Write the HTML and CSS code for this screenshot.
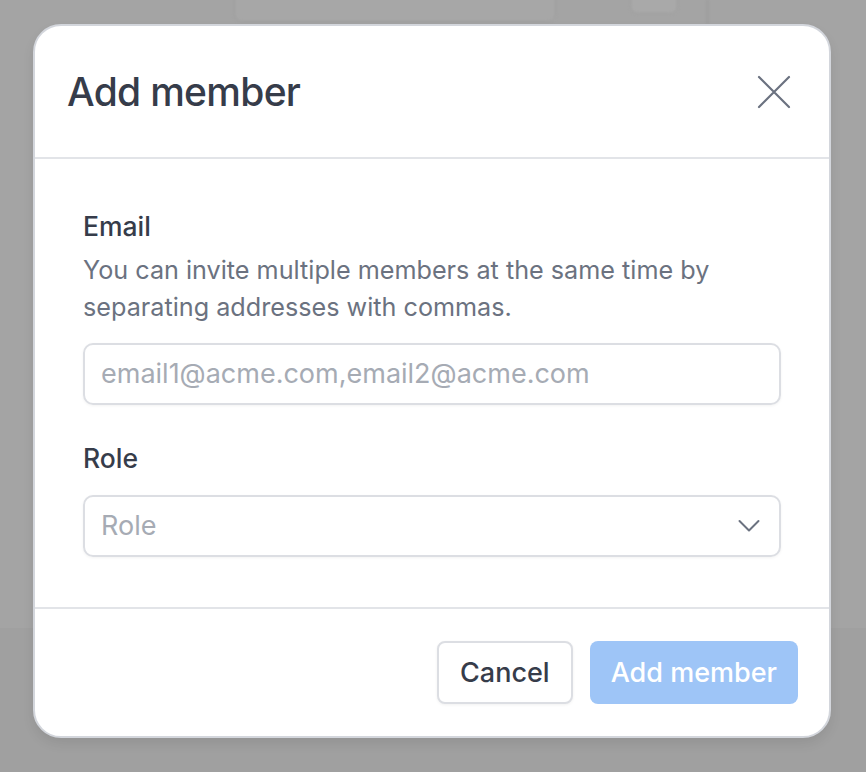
FILE: index.html
```html
<!DOCTYPE html>
<html>
<head>
<meta charset="utf-8">
<link rel="stylesheet" href="styles.css">
</head>
<body>
<div class="backdrop">
  <div class="bg-bar">
    <div class="bg-btn"></div>
    <div class="bg-sq"></div>
    <div class="bg-line"></div>
  </div>
  <div class="bg-band"></div>
  <div class="modal">
    <div class="modal-header">
      <h2 class="title">Add member</h2>
      <button class="close" aria-label="Close">
        <svg width="34" height="34" viewBox="0 0 34 34" fill="none" stroke="#6b7280" stroke-width="2.2" stroke-linecap="round"><path d="M2 2 L32 32 M32 2 L2 32"/></svg>
      </button>
    </div>
    <div class="modal-body">
      <div class="label">Email</div>
      <div class="help">You can invite multiple members at the same time by separating addresses with commas.</div>
      <div class="input input-email"><span class="placeholder">email1@acme.com,email2@acme.com</span></div>
      <div class="label label-role">Role</div>
      <div class="input select">
        <span class="placeholder">Role</span>
        <svg width="24" height="14" viewBox="0 0 24 14" fill="none" stroke="#6b7280" stroke-width="2" stroke-linecap="round" stroke-linejoin="round"><path d="M2.5 2 L12 11.5 L21.5 2"/></svg>
      </div>
    </div>
    <div class="modal-footer">
      <button class="btn btn-cancel">Cancel</button>
      <button class="btn btn-primary">Add member</button>
    </div>
  </div>
</div>
</body>
</html>
```
FILE: styles.css
```css
* { box-sizing: border-box; }
html, body { margin: 0; padding: 0; }
body {
  width: 866px;
  height: 772px;
  overflow: hidden;
  font-family: Inter, "Noto Sans", sans-serif;
  background: #a4a4a4;
}
.backdrop {
  position: relative;
  width: 866px;
  height: 772px;
  padding: 24px 35px 0 33px;
}
.bg-bar {
  position: absolute;
  top: 0;
  left: 0;
  width: 866px;
  height: 24px;
}
.bg-btn {
  position: absolute;
  left: 234px;
  top: -20px;
  width: 322px;
  height: 42px;
  border: 1px solid #9c9c9c;
  border-radius: 8px;
  background: #a7a7a7;
  filter: blur(1.5px);
}
.bg-sq {
  position: absolute;
  left: 630px;
  top: -16px;
  width: 48px;
  height: 30px;
  border-radius: 8px;
  background: #a9a9a9;
  border: 1px solid #9d9d9d;
  filter: blur(1.5px);
}
.bg-line {
  position: absolute;
  left: 706px;
  top: 0;
  width: 3px;
  height: 24px;
  background: #9e9e9e;
  filter: blur(1px);
}
.bg-band {
  position: absolute;
  left: 0;
  top: 628px;
  width: 866px;
  height: 144px;
  background: #a0a0a0;
}
.modal {
  position: relative;
  width: 798px;
  height: 714px;
  background: #fff;
  border: 2px solid #d3d6dc;
  border-radius: 28px;
  display: flex;
  flex-direction: column;
  box-shadow: 0 6px 12px rgba(0,0,0,0.08);
}
.modal-header {
  height: 133px;
  border-bottom: 2px solid #e2e4e8;
  display: flex;
  align-items: center;
  justify-content: space-between;
  padding: 0 38px 0 32px;
  flex-shrink: 0;
}
.title {
  margin: 0;
  font-size: 39px;
  font-weight: 500;
  color: #363c4a;
  letter-spacing: -0.7px;
}
.close {
  background: none;
  border: 0;
  padding: 0;
  width: 34px;
  height: 34px;
  display: flex;
}
.modal-body {
  height: 450px;
  flex-shrink: 0;
  border-bottom: 2px solid #e2e4e8;
  padding: 50px 48px 0 48px;
  display: flex;
  flex-direction: column;
}
.label {
  font-size: 26.5px;
  font-weight: 500;
  color: #363c4a;
  line-height: 34px;
}
.label-role { margin-top: 36px; }
.help {
  font-size: 25.2px;
  color: #6b7280;
  line-height: 37px;
  margin-top: 9px;
}
.input {
  height: 62px;
  border: 2px solid #dcdee3;
  border-radius: 10px;
  display: flex;
  align-items: center;
  padding: 0 16px;
  font-size: 27px;
  box-shadow: 0 1px 3px rgba(0,0,0,0.05);
  flex-shrink: 0;
}
.input-email { margin-top: 16.5px; }
.placeholder { color: #a6abb4; }
.select {
  margin-top: 20px;
  justify-content: space-between;
  padding-right: 18px;
}
.modal-footer {
  flex: 1;
  display: flex;
  justify-content: flex-end;
  align-items: center;
  gap: 17px;
  padding: 0 31px 0 0;
}
.btn {
  font-family: Inter, "Noto Sans", sans-serif;
  font-size: 27px;
  font-weight: 500;
  height: 63px;
  border-radius: 8px;
  padding: 0 21px;
}
.btn-cancel {
  background: #fff;
  border: 2px solid #dcdee3;
  color: #363c4a;
  box-shadow: 0 1px 3px rgba(0,0,0,0.06);
}
.btn-primary {
  background: #9ec5f7;
  border: 0;
  color: #fff;
}
```
